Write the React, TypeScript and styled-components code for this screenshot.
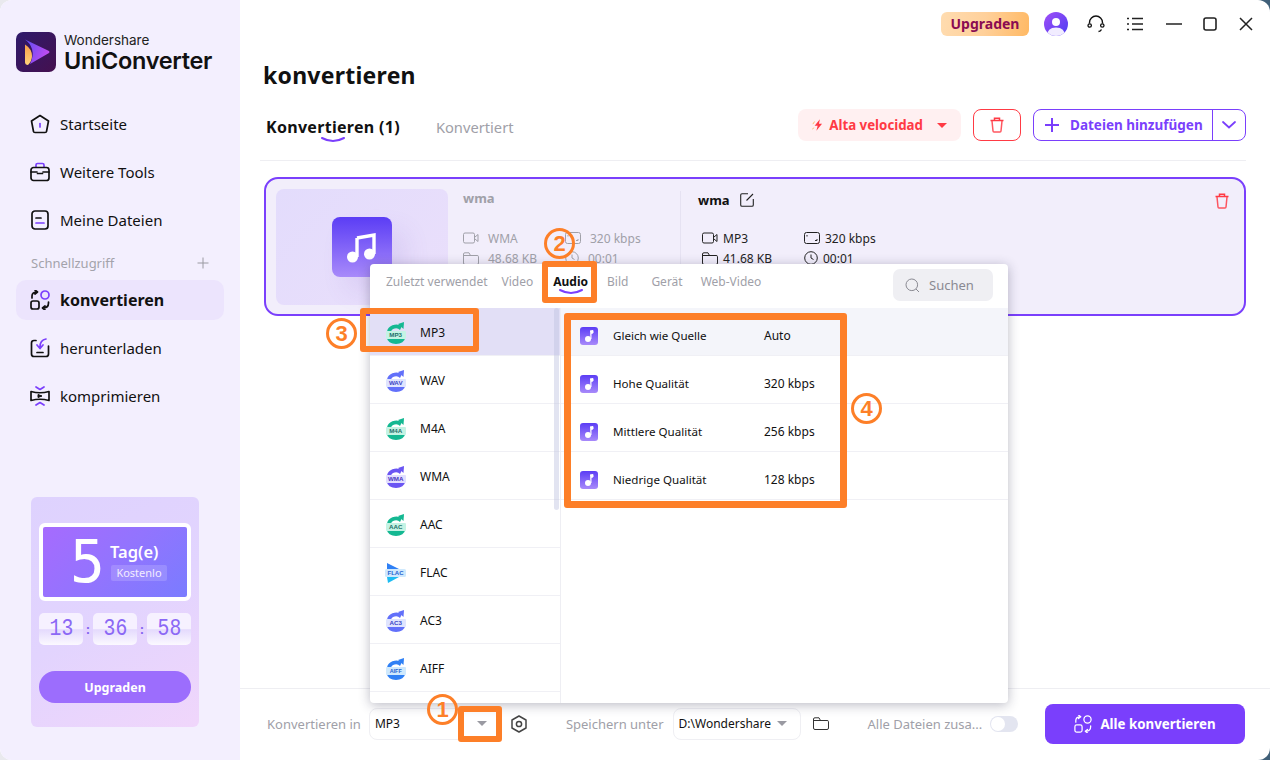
import React from 'react';
import styled, { createGlobalStyle } from 'styled-components';

const Global = createGlobalStyle`
  html, body { margin: 0; padding: 0; }
  body {
    width: 1270px;
    height: 760px;
    overflow: hidden;
    background: linear-gradient(90deg, #e9e9ee 0%, #e9e9ee 60%, #3f5f78 100%);
    font-family: "Noto Sans", "Open Sans", "Liberation Sans", sans-serif;
    color: #111;
  }
`;

const ORANGE = '#fd7f28';
const PURPLE = '#7a3ffc';
const RED = '#ff3a44';

const Window = styled.div`
  position: relative;
  width: 1270px;
  height: 760px;
  display: flex;
  border-radius: 12px;
  overflow: hidden;
  background: #fff;
`;

/* ---------- sidebar ---------- */

const Sidebar = styled.aside`
  width: 240px;
  flex: none;
  display: flex;
  flex-direction: column;
  background: #f3effe;
  padding: 32px 16px 33px;
  box-sizing: border-box;
`;

const Brand = styled.div`
  display: flex;
  align-items: center;
  gap: 8px;
  height: 40px;
`;

const BrandText = styled.div`
  display: flex;
  flex-direction: column;
  padding-top: 3px;
  font-family: "Inter", "Noto Sans", sans-serif;
`;

const BrandTop = styled.span`
  font-size: 13.5px;
  line-height: 15px;
  color: #222;
`;

const BrandName = styled.span`
  font-size: 23.5px;
  line-height: 26px;
  font-weight: 600;
  letter-spacing: -0.3px;
  color: #111;
`;

const NavList = styled.nav`
  display: flex;
  flex-direction: column;
  margin-top: 32px;
`;

const NavItem = styled.div<{ $active?: boolean }>`
  height: 40px;
  margin-bottom: 8px;
  display: flex;
  align-items: center;
  gap: 10px;
  padding-left: 14px;
  border-radius: 10px;
  font-size: ${(p) => (p.$active ? 16 : 15)}px;
  font-weight: ${(p) => (p.$active ? 700 : 400)};
  background: ${(p) => (p.$active ? '#ece4fd' : 'transparent')};
  svg { flex: none; }
`;

const QuickHeader = styled.div`
  height: 20px;
  margin: 5px 0 7px;
  padding: 0 15px;
  display: flex;
  align-items: center;
  justify-content: space-between;
  font-size: 13px;
  color: #a3a3ab;
`;

const Promo = styled.div`
  margin: auto 25px 0 15px;
  width: 168px;
  height: 230px;
  flex: none;
  box-sizing: border-box;
  padding: 26px 8px 0;
  border-radius: 6px;
  background: linear-gradient(150deg, #ded2fe 0%, #e2d4fe 50%, #f0d6fb 100%);
`;

const DaysPanel = styled.div`
  height: 78px;
  box-sizing: border-box;
  border: 4px solid #fff;
  border-radius: 6px;
  background: linear-gradient(135deg, #a66bfe 0%, #9274fe 50%, #7a7cff 100%);
  display: flex;
  align-items: center;
  color: #fff;
  padding-left: 27px;
  gap: 15px;
`;

const BigDigit = styled.span`
  font-family: "DejaVu Sans Mono", monospace;
  font-size: 58px;
  line-height: 60px;
  font-weight: 400;
  display: inline-block;
  width: 25px;
  text-align: center;
`;

const DaysText = styled.div`
  display: flex;
  flex-direction: column;
  align-items: flex-start;
  gap: 4px;
`;

const DaysTitle = styled.span`
  font-size: 16.5px;
  line-height: 18px;
  font-weight: 600;
`;

const FreeChip = styled.span`
  font-size: 11px;
  line-height: 16px;
  width: 56px;
  margin-left: 1px;
  text-align: center;
  background: rgba(255, 255, 255, 0.16);
  border-radius: 2px;
  color: #f3ecff;
`;

const TimerRow = styled.div`
  display: flex;
  align-items: center;
  justify-content: space-between;
  margin-top: 12px;
`;

const TimerBox = styled.div`
  width: 44px;
  height: 32px;
  border-radius: 5px;
  background: linear-gradient(180deg, #f6f1ff 0%, #f6f1ff 50%, #e4dafd 52%, #fbf9ff 100%);
  text-align: center;
`;

const TimerDigits = styled.span`
  display: inline-block;
  color: #8b68f5;
  font-family: "Liberation Mono", monospace;
  font-size: 24px;
  line-height: 32px;
  transform: scaleX(0.82);
`;

const TimerColon = styled.span`
  color: #7f5cf0;
  font-size: 12px;
  font-weight: 700;
`;

const PromoButton = styled.div`
  margin-top: 26px;
  height: 32px;
  border-radius: 16px;
  background: #9c6dfd;
  color: #fff;
  text-align: center;
  font-size: 12.5px;
  font-weight: 700;
  line-height: 33px;
`;

/* ---------- main ---------- */

const Main = styled.main`
  position: relative;
  flex: 1;
  min-width: 0;
  display: flex;
  flex-direction: column;
`;

const TitleBar = styled.div`
  height: 48px;
  flex: none;
  display: flex;
  align-items: center;
  justify-content: flex-end;
  padding-right: 17px;
`;

const UpgradeBadge = styled.div`
  width: 88px;
  height: 24px;
  border-radius: 6px;
  background: linear-gradient(100deg, #ffdcb0 0%, #ffd09a 50%, #ffb964 100%);
  color: #8a0b52;
  font-size: 14px;
  font-weight: 700;
  line-height: 24px;
  text-align: center;
`;

const BarIcon = styled.span<{ $gap: number }>`
  display: flex;
  margin-left: ${(p) => p.$gap}px;
`;

const Heading = styled.h1`
  margin: 0 0 0 23px;
  height: 54px;
  font-size: 23px;
  letter-spacing: 0.25px;
  line-height: 54px;
  font-weight: 700;
`;

const Toolbar = styled.div`
  margin: 7px 24px 0 20px;
  height: 52px;
  flex: none;
  box-sizing: border-box;
  border-bottom: 1px solid #eeeef2;
  display: flex;
  align-items: flex-start;
`;

const PageTabs = styled.div`
  display: flex;
  margin-left: 6px;
  height: 32px;
  align-items: center;
  gap: 36px;
  margin-top: 2px;
`;

const PageTab = styled.span<{ $active?: boolean }>`
  position: relative;
  font-size: ${(p) => (p.$active ? 16 : 14.7)}px;
  letter-spacing: ${(p) => (p.$active ? 0.3 : 0)}px;
  font-weight: ${(p) => (p.$active ? 700 : 400)};
  color: ${(p) => (p.$active ? '#111' : '#a0a0a8')};
`;

const TabArc = styled.svg`
  position: absolute;
  left: 50%;
  bottom: -5px;
  margin-left: -12px;
`;

const ToolActions = styled.div`
  margin-left: auto;
  display: flex;
  gap: 12px;
`;

const SpeedButton = styled.div`
  width: 163px;
  height: 32px;
  box-sizing: border-box;
  padding: 0 14px;
  border-radius: 8px;
  background: #fff0f1;
  color: ${RED};
  display: flex;
  align-items: center;
  gap: 5px;
  font-size: 13.3px;
  font-weight: 700;
  white-space: nowrap;
`;

const TrashButton = styled.div`
  width: 48px;
  height: 32px;
  box-sizing: border-box;
  border: 1px solid ${RED};
  border-radius: 8px;
  display: flex;
  align-items: center;
  justify-content: center;
`;

const AddButton = styled.div`
  width: 213px;
  height: 32px;
  box-sizing: border-box;
  border: 1px solid ${PURPLE};
  border-radius: 8px;
  display: flex;
  align-items: center;
  color: ${PURPLE};
  font-size: 13.5px;
  font-weight: 700;
`;

const AddMain = styled.div`
  flex: 1;
  display: flex;
  align-items: center;
  gap: 10px;
  padding-left: 10px;
  height: 100%;
  border-right: 1px solid ${PURPLE};
`;

const AddCaret = styled.div`
  width: 32px;
  display: flex;
  justify-content: center;
`;

const Content = styled.div`
  flex: 1;
  padding: 16px 24px 0;
  min-height: 0;
`;

const FileCard = styled.section`
  position: relative;
  height: 139px;
  box-sizing: border-box;
  border: 2px solid ${PURPLE};
  border-radius: 14px;
  background: #f2eefb;
  display: flex;
  padding: 10px;
`;

const Thumb = styled.div`
  width: 172px;
  height: 116px;
  flex: none;
  border-radius: 8px;
  background: linear-gradient(135deg, #e3dcfc 0%, #eadffb 100%);
  display: flex;
  align-items: center;
  justify-content: center;
`;

const MusicTile = styled.div<{ $size: number }>`
  width: ${(p) => p.$size}px;
  height: ${(p) => p.$size}px;
  flex: none;
  border-radius: ${(p) => (p.$size > 30 ? 8 : 3)}px;
  background: linear-gradient(180deg, #5b3df5 0%, #a88afa 100%);
  display: flex;
  align-items: center;
  justify-content: center;
  box-shadow: ${(p) => (p.$size > 30 ? '14px 14px 24px rgba(120, 90, 200, 0.12)' : 'none')};
`;

const InfoBlock = styled.div<{ $target?: boolean }>`
  width: ${(p) => (p.$target ? 300 : 232)}px;
  box-sizing: border-box;
  padding-left: ${(p) => (p.$target ? 17 : 15)}px;
  ${(p) => (p.$target ? 'border-left: 1px solid #e6e2f2; height: 100px; margin-top: 2px;' : '')}
`;

const InfoName = styled.div<{ $target?: boolean }>`
  display: flex;
  align-items: center;
  gap: 10px;
  height: 16px;
  margin-top: 1px;
  font-size: 13px;
  font-weight: 700;
  color: ${(p) => (p.$target ? '#111' : '#a0a0a8')};
`;

const MetaGrid = styled.div<{ $target?: boolean }>`
  display: grid;
  grid-template-columns: 102px 100px;
  grid-auto-rows: 20px;
  margin-top: ${(p) => (p.$target ? 20 : 22)}px;
  padding-left: ${(p) => (p.$target ? 4 : 0)}px;
  font-size: 12px;
  color: ${(p) => (p.$target ? '#222' : '#a0a0a8')};
`;

const MetaCell = styled.span<{ $target?: boolean }>`
  display: flex;
  align-items: center;
  gap: ${(p) => (p.$target ? 5 : 9)}px;
  white-space: nowrap;
`;

const CardTrash = styled.div`
  position: absolute;
  top: 14px;
  right: 14px;
  display: flex;
`;

/* ---------- format popup ---------- */

const Popup = styled.div`
  position: absolute;
  left: 130px;
  top: 264px;
  width: 638px;
  height: 439px;
  background: #fff;
  border-radius: 4px;
  box-shadow: 0 2px 12px rgba(40, 40, 70, 0.32);
  display: flex;
  flex-direction: column;
  overflow: hidden;
`;

const PopupTabs = styled.div`
  height: 44px;
  flex: none;
  display: flex;
  align-items: center;
  padding: 0 15px 10px 16px;
  box-sizing: border-box;
`;

const PopupTab = styled.span<{ $active?: boolean; $gap: number }>`
  position: relative;
  margin-left: ${(p) => p.$gap}px;
  font-size: 12px;
  font-weight: ${(p) => (p.$active ? 700 : 400)};
  color: ${(p) => (p.$active ? '#111' : '#a0a0a8')};
  white-space: nowrap;
`;

const SearchBox = styled.div`
  margin: 8px 0 0 auto;
  width: 100px;
  height: 32px;
  box-sizing: border-box;
  padding-left: 12px;
  border-radius: 7px;
  background: #efeff3;
  display: flex;
  align-items: center;
  gap: 9px;
  font-size: 13px;
  color: #8a8a92;
`;

const PopupBody = styled.div`
  flex: 1;
  display: flex;
  min-height: 0;
`;

const FormatColumn = styled.div`
  position: relative;
  width: 191px;
  flex: none;
  box-sizing: border-box;
  border-right: 1px solid #eeeef3;
`;

const FormatRow = styled.div<{ $active?: boolean }>`
  height: 48px;
  box-sizing: border-box;
  border-bottom: 1px solid #f0f0f5;
  display: flex;
  align-items: center;
  gap: 13px;
  padding: 2px 0 0 15px;
  font-size: 12px;
  color: #111;
  background: ${(p) => (p.$active ? '#e2dff6' : 'transparent')};
`;

const ScrollThumb = styled.div`
  position: absolute;
  right: 1px;
  top: 0;
  width: 5px;
  height: 202px;
  border-radius: 3px;
  background: rgba(190, 195, 225, 0.45);
`;

const QualityColumn = styled.div`
  flex: 1;
`;

const QualityRow = styled.div<{ $active?: boolean }>`
  height: 48px;
  box-sizing: border-box;
  border-bottom: 1px solid #f0f0f5;
  display: flex;
  align-items: center;
  padding: 8px 0 0 19px;
  font-size: 12px;
  color: #111;
  background: ${(p) => (p.$active ? '#f4f5fa' : 'transparent')};
`;

const QualityName = styled.span`
  margin-left: 15px;
  width: 151px;
  font-size: 11.6px;
`;

/* ---------- footer ---------- */

const Footer = styled.footer`
  height: 72px;
  flex: none;
  box-sizing: border-box;
  border-top: 1px solid #eeeef2;
  display: flex;
  align-items: center;
  padding: 0 25px 2px 27px;
`;

const FooterLabel = styled.span<{ $gap?: number }>`
  margin-left: ${(p) => p.$gap ?? 0}px;
  font-size: 13px;
  color: #a0a0a8;
  white-space: nowrap;
`;

const SelectBox = styled.div<{ $width: number; $gap: number }>`
  width: ${(p) => p.$width}px;
  height: 32px;
  margin-left: ${(p) => p.$gap}px;
  box-sizing: border-box;
  border: 1px solid #efeff3;
  border-radius: 8px;
  display: flex;
  align-items: center;
  justify-content: space-between;
  padding: 0 13px 0 5px;
  font-size: 12px;
  color: #111;
  white-space: nowrap;
`;

const Caret = styled.span<{ $color?: string; $gap?: number }>`
  width: 0;
  height: 0;
  flex: none;
  margin-left: ${(p) => p.$gap ?? 0}px;
  border-left: 5px solid transparent;
  border-right: 5px solid transparent;
  border-top: 5px solid ${(p) => p.$color ?? '#9a9aa2'};
`;

const Toggle = styled.span`
  position: relative;
  width: 28px;
  height: 16px;
  margin-left: 8px;
  flex: none;
  border-radius: 8px;
  background: #e3e5f0;
  &::after {
    content: '';
    position: absolute;
    left: 1px;
    top: 1px;
    width: 14px;
    height: 14px;
    border-radius: 50%;
    background: #fff;
  }
`;

const ConvertAll = styled.div`
  margin-left: auto;
  width: 200px;
  height: 40px;
  border-radius: 8px;
  background: ${PURPLE};
  color: #fff;
  display: flex;
  align-items: center;
  justify-content: center;
  gap: 8px;
  font-size: 13.3px;
  font-weight: 700;
`;

/* ---------- tutorial marks ---------- */

const MarkBox = styled.div<{ $x: number; $y: number; $w: number; $h: number; $b?: number }>`
  position: absolute;
  left: ${(p) => p.$x}px;
  top: ${(p) => p.$y}px;
  width: ${(p) => p.$w}px;
  height: ${(p) => p.$h}px;
  box-sizing: border-box;
  border: ${(p) => p.$b ?? 6}px solid ${ORANGE};
  border-radius: 3px;
  pointer-events: none;
`;

const MarkNumber = styled.div<{ $x: number; $y: number }>`
  position: absolute;
  left: ${(p) => p.$x}px;
  top: ${(p) => p.$y}px;
  width: 31px;
  height: 31px;
  box-sizing: border-box;
  border: 3px solid ${ORANGE};
  border-radius: 50%;
  color: ${ORANGE};
  font-family: "Liberation Sans", sans-serif;
  font-size: 22px;
  font-weight: 700;
  line-height: 25px;
  text-align: center;
`;

/* ---------- icons ---------- */

const Logo = () => (
  <svg width="40" height="40" viewBox="0 0 40 40">
    <defs>
      <linearGradient id="lg-bg" x1="0" y1="0" x2="1" y2="1">
        <stop offset="0" stopColor="#2e1a6b" />
        <stop offset="1" stopColor="#45104f" />
      </linearGradient>
      <linearGradient id="lg-play" x1="0" y1="0" x2="1" y2="0.4">
        <stop offset="0" stopColor="#5a4cf5" />
        <stop offset="1" stopColor="#c04cf0" />
      </linearGradient>
      <linearGradient id="lg-fold" x1="0" y1="0" x2="0" y2="1">
        <stop offset="0" stopColor="#f9a04a" />
        <stop offset="1" stopColor="#ffd27a" />
      </linearGradient>
    </defs>
    <rect width="40" height="40" rx="7" fill="url(#lg-bg)" />
    <path d="M9 7.5 L33 19 Q34 20 33 21 L14 32 Q18 24 16 17 Q14 11 9 7.5Z" fill="url(#lg-play)" />
    <path d="M9 12.5 Q16 17 16 24 Q16 29 12 33 Q9 33 9 30Z" fill="url(#lg-fold)" />
  </svg>
);

const Ink = { fill: 'none', stroke: '#111', strokeWidth: 1.7, strokeLinecap: 'round', strokeLinejoin: 'round' } as const;
const Accent = { ...Ink, stroke: PURPLE };

const HomeIcon = () => (
  <svg width="20" height="20" viewBox="0 0 20 20">
    <path d="M10 1.5 L18.5 7 L16.5 17.5 Q16.4 18.5 15 18.5 H5 Q3.6 18.5 3.5 17.5 L1.5 7Z" {...Ink} />
    <path d="M10 9.5 V13" {...Accent} />
  </svg>
);

const ToolsIcon = () => (
  <svg width="20" height="20" viewBox="0 0 20 20">
    <path d="M6 5 V3 Q6 1.5 7.5 1.5 H12.5 Q14 1.5 14 3 V5" {...Accent} />
    <rect x="1" y="5.5" width="18" height="13" rx="2.5" {...Ink} />
    <path d="M1 10 H7 M13 10 H19" {...Ink} />
    <path d="M7.5 11.5 H12.5" {...Ink} />
  </svg>
);

const FilesIcon = () => (
  <svg width="20" height="20" viewBox="0 0 20 20">
    <rect x="2" y="1" width="16" height="18" rx="3" {...Ink} />
    <path d="M6 8 H11" {...Ink} />
    <path d="M6 13 H14" {...Accent} />
  </svg>
);

const ConvertIcon = ({ white }: { white?: boolean }) => {
  const ink = white ? { ...Ink, stroke: '#fff', strokeWidth: 1.4 } : Ink;
  const accent = white ? { ...Ink, stroke: '#fff', strokeWidth: 1.4 } : Accent;
  return (
    <svg width={white ? 18 : 20} height={white ? 18 : 20} viewBox="0 0 20 20">
      <circle cx="15" cy="5" r="4" {...accent} />
      <rect x="1" y="11" width="8" height="8" rx="2" {...ink} />
      <path d="M2 8 V6 Q2 2 7 2 M5 0 L7.5 2 L5 4" {...ink} />
      <path d="M18.5 12 V13 Q18.5 18 13 18 M15 16 L12.5 18 L15 20" {...ink} />
    </svg>
  );
};

const DownloadIcon = () => (
  <svg width="20" height="20" viewBox="0 0 20 20">
    <path d="M6 2.5 H4 Q1.5 2.5 1.5 5 V16 Q1.5 18.5 4 18.5 H16 Q18.5 18.5 18.5 16 V8" {...Ink} />
    <path d="M7 14.5 H13" {...Ink} />
    <path d="M16 1 Q10 2 10 9 M7 7 L10 10.5 L13 7" {...Accent} />
  </svg>
);

const CompressIcon = () => (
  <svg width="20" height="20" viewBox="0 0 20 20">
    <path d="M1 5.5 Q10 8 19 5.5 V14.5 Q10 12 1 14.5Z" {...Ink} />
    <path d="M8 8.5 L12 10 L8 11.5Z" fill="#111" stroke="#111" />
    <path d="M6 1 L10 3.5 L14 1 M6 19 L10 16.5 L14 19" {...Accent} />
  </svg>
);

const PlusThin = () => (
  <svg width="12" height="12" viewBox="0 0 12 12">
    <path d="M6 .5 V11.5 M.5 6 H11.5" stroke="#9a9aa2" strokeWidth="1" />
  </svg>
);

const Avatar = () => (
  <svg width="24" height="24" viewBox="0 0 24 24">
    <defs>
      <linearGradient id="av" x1="0" y1="0" x2="1" y2="1">
        <stop offset="0" stopColor="#a24ff7" />
        <stop offset="1" stopColor="#4c3df2" />
      </linearGradient>
      <clipPath id="av-clip"><circle cx="12" cy="12" r="12" /></clipPath>
    </defs>
    <circle cx="12" cy="12" r="12" fill="url(#av)" />
    <circle cx="12" cy="10" r="4" fill="#fff" />
    <path d="M3 24 Q3 15.5 12 15.5 Q21 15.5 21 24Z" fill="#f1ecff" clipPath="url(#av-clip)" />
  </svg>
);

const Headset = () => (
  <svg width="18" height="18" viewBox="0 0 18 18">
    <path d="M2.5 8.5 V7.5 A6.5 6.5 0 0 1 15.5 7.5 V8.5" fill="none" stroke="#111" strokeWidth="1.4" />
    <circle cx="2.7" cy="10.5" r="1.7" fill="none" stroke="#111" strokeWidth="1.3" />
    <circle cx="15.3" cy="10.5" r="1.7" fill="none" stroke="#111" strokeWidth="1.3" />
    <path d="M14.5 14.5 Q13.5 16.5 11.5 16.5" fill="none" stroke="#111" strokeWidth="1.4" />
  </svg>
);

const MenuIcon = () => (
  <svg width="16" height="14" viewBox="0 0 16 14">
    <path d="M0 1.5 H2 M5 1.5 H16 M0 7 H2 M5 7 H16 M0 12.5 H2 M5 12.5 H16" stroke="#222" strokeWidth="1.5" fill="none" />
  </svg>
);

const MinIcon = () => (
  <svg width="16" height="14" viewBox="0 0 16 14">
    <path d="M0 7 H16" stroke="#222" strokeWidth="1.6" />
  </svg>
);

const MaxIcon = () => (
  <svg width="14" height="14" viewBox="0 0 14 14">
    <rect x="1" y="1" width="12" height="12" rx="2" fill="none" stroke="#222" strokeWidth="1.6" />
  </svg>
);

const CloseIcon = () => (
  <svg width="14" height="14" viewBox="0 0 14 14">
    <path d="M1 1 L13 13 M13 1 L1 13" stroke="#222" strokeWidth="1.5" />
  </svg>
);

const Bolt = () => (
  <svg width="14" height="14" viewBox="0 0 14 14">
    <path d="M9 .5 L3 8 H6.5 L5 13.5 L11.5 5.5 H8Z" fill={RED} />
    <path d="M3 3 L1 6 M2 10 L0.5 12" stroke="#ffb35c" strokeWidth="1" />
  </svg>
);

const TrashIcon = ({ size = 16 }: { size?: number }) => (
  <svg width={size} height={size} viewBox="0 0 16 16">
    <path d="M1.5 3.5 H14.5 M5.5 3 V1.2 H10.5 V3" fill="none" stroke={RED} strokeWidth="1.5" />
    <path d="M3 4 L4 14 Q4.1 15 5 15 H11 Q11.9 15 12 14 L13 4" fill="none" stroke={RED} strokeWidth="1.5" opacity=".85" />
  </svg>
);

const PlusBold = () => (
  <svg width="16" height="16" viewBox="0 0 16 16">
    <path d="M8 1 V15 M1 8 H15" stroke={PURPLE} strokeWidth="2" />
  </svg>
);

const Chevron = () => (
  <svg width="14" height="8" viewBox="0 0 14 8">
    <path d="M1 1 L7 6.5 L13 1" fill="none" stroke={PURPLE} strokeWidth="1.8" strokeLinecap="round" />
  </svg>
);

const NoteLarge = () => (
  <svg width="34" height="34" viewBox="0 0 34 34">
    <path d="M12 8 L29 5 V24" fill="none" stroke="#fff" strokeWidth="3.4" />
    <path d="M12 8 V27" fill="none" stroke="#fff" strokeWidth="3.4" />
    <circle cx="7.5" cy="27" r="5.5" fill="#fff" />
    <circle cx="24.5" cy="24" r="5.5" fill="#fff" />
  </svg>
);

const NoteSmall = () => (
  <svg width="10" height="12" viewBox="0 0 10 12">
    <path d="M6 1 L9 .5 V3 L7 3.4 V9" fill="#fff" stroke="#fff" strokeWidth="1" />
    <circle cx="4" cy="9" r="3" fill="#fff" />
  </svg>
);

const VideoGlyph = ({ c }: { c: string }) => (
  <svg width="16" height="12" viewBox="0 0 16 12">
    <rect x=".5" y="1" width="11" height="10" rx="1.5" fill="none" stroke={c} />
    <path d="M12 5 L15 2.5 V9.5 L12 7" fill="none" stroke={c} />
  </svg>
);

const FolderGlyph = ({ c, size = 16 }: { c: string; size?: number }) => (
  <svg width={size} height={(size * 13) / 16} viewBox="0 0 16 13">
    <path d="M.5 3 V11 Q.5 12.5 2 12.5 H14 Q15.5 12.5 15.5 11 V4.5 Q15.5 3.5 14 3.5 H.5 M.5 3 V2 Q.5 .8 2 .8 H6 L7.5 3.5" fill="none" stroke={c} />
  </svg>
);

const ScreenGlyph = ({ c }: { c: string }) => (
  <svg width="16" height="12" viewBox="0 0 16 12">
    <rect x=".5" y=".5" width="15" height="11" rx="2" fill="none" stroke={c} />
    <path d="M3 3 V4.5 M11 8.5 H13 V7" fill="none" stroke={c} />
  </svg>
);

const ClockGlyph = ({ c }: { c: string }) => (
  <svg width="14" height="14" viewBox="0 0 14 14">
    <circle cx="7" cy="7" r="6.3" fill="none" stroke={c} />
    <path d="M7 3.5 V7 L9.5 8.5" fill="none" stroke={c} />
  </svg>
);

const EditGlyph = () => (
  <svg width="14" height="14" viewBox="0 0 14 14">
    <path d="M8 .8 H2 Q.7 .8 .7 2 V12 Q.7 13.3 2 13.3 H12 Q13.3 13.3 13.3 12 V6" fill="none" stroke="#222" strokeWidth="1.1" />
    <path d="M6.5 7.5 L13 1" stroke="#222" strokeWidth="1.1" />
  </svg>
);

const SearchGlyph = () => (
  <svg width="15" height="15" viewBox="0 0 15 15">
    <circle cx="6.8" cy="6.8" r="5.8" fill="none" stroke="#8a8a92" />
    <path d="M11 11 L14 14" stroke="#8a8a92" />
  </svg>
);

const GearGlyph = () => (
  <svg width="16" height="18" viewBox="0 0 16 18">
    <path d="M8 1 L15 5 V13 L8 17 L1 13 V5Z" fill="none" stroke="#444" strokeWidth="1.5" strokeLinejoin="round" />
    <circle cx="8" cy="9" r="2.6" fill="none" stroke="#444" strokeWidth="1.5" />
  </svg>
);

const FormatIcon = ({ label, c, soft, ink }: { label: string; c: string; soft: string; ink: string }) => {
  if (label === 'FLAC') {
    return (
      <svg width="22" height="22" viewBox="0 0 22 22">
        <path d="M2 1 L14 7 H2Z" fill={c} />
        <path d="M2 15 H14 L3 21Z" fill="#1dbcf2" />
        <rect x="0" y="7" width="21" height="8" rx="1.5" fill={soft} />
        <text x="10.5" y="13.3" textAnchor="middle" fontSize="6" fontWeight="700" fontFamily="Liberation Sans" fill={ink}>{label}</text>
      </svg>
    );
  }
  return (
    <svg width="22" height="22" viewBox="0 0 22 22">
      <path d="M2 10 A9.5 8 0 0 1 17 4 L15 8 A5 4 0 0 0 6 10Z" fill={c} />
      <path d="M13 2 L19 0 L18.5 7Z" fill={c} />
      <path d="M2 16 H20 A9 6 0 0 1 2 16Z" fill={c} />
      <rect x="1" y="9" width="20" height="8" rx="1" fill={soft} />
      <text x="10.7" y="15.2" textAnchor="middle" fontSize={label.length > 3 ? 5.4 : 6.2} fontWeight="700" fontFamily="Liberation Sans" fill={ink}>{label}</text>
    </svg>
  );
};

const GREEN = ['#14b892', '#c4f3e4', '#1c6f68'];
const BLUE = ['#6270fa', '#dfe4ff', '#3a43c4'];
const VIOLET = ['#6a55f3', '#e1deff', '#4535c0'];
const SKY = ['#2f80f5', '#cfe9fd', '#2262d0'];

const formats = [
  { label: 'MP3', tone: GREEN },
  { label: 'WAV', tone: BLUE },
  { label: 'M4A', tone: GREEN },
  { label: 'WMA', tone: VIOLET },
  { label: 'AAC', tone: GREEN },
  { label: 'FLAC', tone: SKY },
  { label: 'AC3', tone: BLUE },
  { label: 'AIFF', tone: SKY },
];

const qualities = [
  { name: 'Gleich wie Quelle', rate: 'Auto' },
  { name: 'Hohe Qualität', rate: '320 kbps' },
  { name: 'Mittlere Qualität', rate: '256 kbps' },
  { name: 'Niedrige Qualität', rate: '128 kbps' },
];

export default function App() {
  return (
    <>
      <Global />
      <Window>
        <Sidebar>
          <Brand>
            <Logo />
            <BrandText>
              <BrandTop>Wondershare</BrandTop>
              <BrandName>UniConverter</BrandName>
            </BrandText>
          </Brand>
          <NavList>
            <NavItem><HomeIcon />Startseite</NavItem>
            <NavItem><ToolsIcon />Weitere Tools</NavItem>
            <NavItem><FilesIcon />Meine Dateien</NavItem>
            <QuickHeader>Schnellzugriff<PlusThin /></QuickHeader>
            <NavItem $active><ConvertIcon />konvertieren</NavItem>
            <NavItem><DownloadIcon />herunterladen</NavItem>
            <NavItem><CompressIcon />komprimieren</NavItem>
          </NavList>
          <Promo>
            <DaysPanel>
              <BigDigit>5</BigDigit>
              <DaysText>
                <DaysTitle>Tag(e)</DaysTitle>
                <FreeChip>Kostenlo</FreeChip>
              </DaysText>
            </DaysPanel>
            <TimerRow>
              <TimerBox><TimerDigits>13</TimerDigits></TimerBox>
              <TimerColon>:</TimerColon>
              <TimerBox><TimerDigits>36</TimerDigits></TimerBox>
              <TimerColon>:</TimerColon>
              <TimerBox><TimerDigits>58</TimerDigits></TimerBox>
            </TimerRow>
            <PromoButton>Upgraden</PromoButton>
          </Promo>
        </Sidebar>

        <Main>
          <TitleBar>
            <UpgradeBadge>Upgraden</UpgradeBadge>
            <BarIcon $gap={15}><Avatar /></BarIcon>
            <BarIcon $gap={19}><Headset /></BarIcon>
            <BarIcon $gap={22}><MenuIcon /></BarIcon>
            <BarIcon $gap={23}><MinIcon /></BarIcon>
            <BarIcon $gap={21}><MaxIcon /></BarIcon>
            <BarIcon $gap={22}><CloseIcon /></BarIcon>
          </TitleBar>
          <Heading>konvertieren</Heading>
          <Toolbar>
            <PageTabs>
              <PageTab $active>
                Konvertieren (1)
                <TabArc width="24" height="6" viewBox="0 0 24 6">
                  <path d="M1 1 Q12 7 23 1" fill="none" stroke={PURPLE} strokeWidth="2" strokeLinecap="round" />
                </TabArc>
              </PageTab>
              <PageTab>Konvertiert</PageTab>
            </PageTabs>
            <ToolActions>
              <SpeedButton><Bolt />Alta velocidad<Caret $color={RED} $gap={9} /></SpeedButton>
              <TrashButton><TrashIcon /></TrashButton>
              <AddButton>
                <AddMain><PlusBold />Dateien hinzufügen</AddMain>
                <AddCaret><Chevron /></AddCaret>
              </AddButton>
            </ToolActions>
          </Toolbar>
          <Content>
            <FileCard>
              <Thumb>
                <MusicTile $size={60}><NoteLarge /></MusicTile>
              </Thumb>
              <InfoBlock>
                <InfoName>wma</InfoName>
                <MetaGrid>
                  <MetaCell><VideoGlyph c="#a0a0a8" />WMA</MetaCell>
                  <MetaCell><ScreenGlyph c="#a0a0a8" />320 kbps</MetaCell>
                  <MetaCell><FolderGlyph c="#a0a0a8" />48.68 KB</MetaCell>
                  <MetaCell><ClockGlyph c="#a0a0a8" />00:01</MetaCell>
                </MetaGrid>
              </InfoBlock>
              <InfoBlock $target>
                <InfoName $target>wma<EditGlyph /></InfoName>
                <MetaGrid $target>
                  <MetaCell $target><VideoGlyph c="#222" />MP3</MetaCell>
                  <MetaCell $target><ScreenGlyph c="#222" />320 kbps</MetaCell>
                  <MetaCell $target><FolderGlyph c="#222" />41.68 KB</MetaCell>
                  <MetaCell $target><ClockGlyph c="#222" />00:01</MetaCell>
                </MetaGrid>
              </InfoBlock>
              <CardTrash><TrashIcon /></CardTrash>
            </FileCard>
          </Content>
          <Footer>
            <FooterLabel>Konvertieren in</FooterLabel>
            <SelectBox $width={132} $gap={8}>MP3<Caret /></SelectBox>
            <BarIcon $gap={10}><GearGlyph /></BarIcon>
            <FooterLabel $gap={39}>Speichern unter</FooterLabel>
            <SelectBox $width={128} $gap={9}>D:\Wondershare<Caret /></SelectBox>
            <BarIcon $gap={12}><FolderGlyph c="#333" /></BarIcon>
            <FooterLabel $gap={39}>Alle Dateien zusa...</FooterLabel>
            <Toggle />
            <ConvertAll><ConvertIcon white />Alle konvertieren</ConvertAll>
          </Footer>

          <Popup>
            <PopupTabs>
              <PopupTab $gap={0}>Zuletzt verwendet</PopupTab>
              <PopupTab $gap={14}>Video</PopupTab>
              <PopupTab $gap={20} $active>
                Audio
                <TabArc width="24" height="6" viewBox="0 0 24 6">
                  <path d="M1 1 Q12 7 23 1" fill="none" stroke={PURPLE} strokeWidth="2" strokeLinecap="round" />
                </TabArc>
              </PopupTab>
              <PopupTab $gap={19}>Bild</PopupTab>
              <PopupTab $gap={23}>Gerät</PopupTab>
              <PopupTab $gap={18}>Web-Video</PopupTab>
              <SearchBox><SearchGlyph />Suchen</SearchBox>
            </PopupTabs>
            <PopupBody>
              <FormatColumn>
                {formats.map((f, i) => (
                  <FormatRow key={f.label} $active={i === 0}>
                    <FormatIcon label={f.label} c={f.tone[0]} soft={f.tone[1]} ink={f.tone[2]} />
                    {f.label}
                  </FormatRow>
                ))}
                <ScrollThumb />
              </FormatColumn>
              <QualityColumn>
                {qualities.map((q, i) => (
                  <QualityRow key={q.name} $active={i === 0}>
                    <MusicTile $size={18}><NoteSmall /></MusicTile>
                    <QualityName>{q.name}</QualityName>
                    {q.rate}
                  </QualityRow>
                ))}
              </QualityColumn>
            </PopupBody>
          </Popup>
        </Main>

        <MarkBox $x={458} $y={706} $w={44} $h={36} />
        <MarkNumber $x={427} $y={694}>1</MarkNumber>
        <MarkBox $x={542} $y={261} $w={55} $h={42} />
        <MarkNumber $x={544} $y={228}>2</MarkNumber>
        <MarkBox $x={360} $y={308} $w={119} $h={44} />
        <MarkNumber $x={326} $y={318}>3</MarkNumber>
        <MarkBox $x={564} $y={313} $w={283} $h={195} $b={7} />
        <MarkNumber $x={851} $y={393}>4</MarkNumber>
      </Window>
    </>
  );
}
